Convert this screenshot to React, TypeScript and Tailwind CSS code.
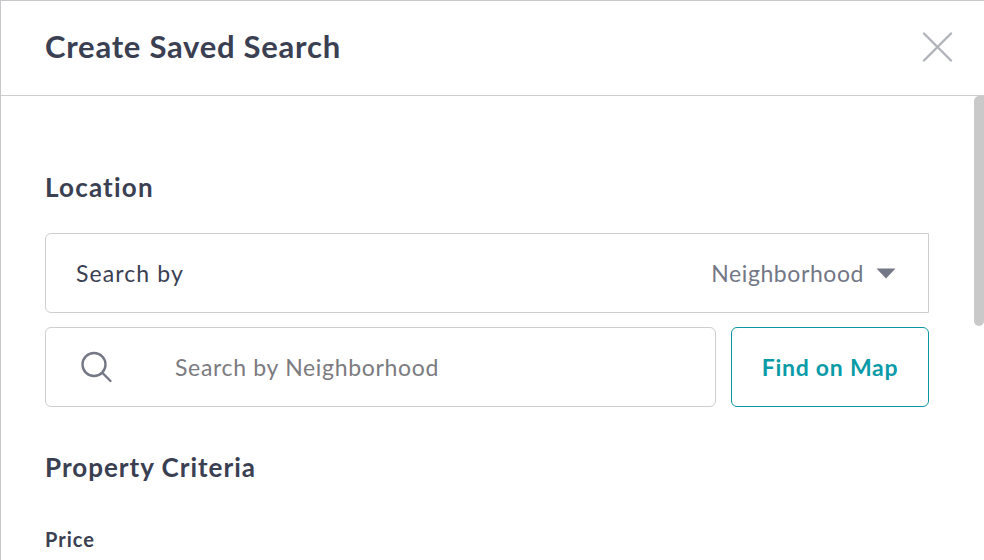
const font = "font-['Lato','Noto_Sans',sans-serif]";

function SectionTitle({ children, className }: { children: string; className: string }) {
  return <h2 className={`text-[26px] leading-8 font-bold text-[#3a4052] ${className}`}>{children}</h2>;
}

export default function App() {
  return (
    <div className={`${font} relative h-[560px] w-[984px] overflow-hidden border-t border-l border-[#c8c8cc] bg-white`}>
      {/* Header */}
      <header className="flex h-[95px] items-center justify-between border-b border-[#cdcdd0] pr-[31px] pl-[44px]">
        <h1 className="pb-1 text-[31px] leading-10 font-bold tracking-[0.75px] text-[#3a4052]">Create Saved Search</h1>
        <svg width="31" height="30" viewBox="0 0 31 30" fill="none" className="mb-[2px] stroke-[#b1b3ba]" strokeWidth="2.4" strokeLinecap="round">
          <path d="M2 1.5l27 27M29 1.5l-27 27" />
        </svg>
      </header>

      {/* Scrollbar */}
      <div className="absolute top-[95px] right-0 h-[230px] w-[10px] rounded-l-[5px] rounded-b-[5px] bg-[#c9c9c9]" />

      {/* Form */}
      <main className="flex w-[928px] flex-col pt-[75px] pl-[44px]">
        <SectionTitle className="tracking-[1.2px]">Location</SectionTitle>

        <div className="mt-[30px] flex h-20 items-center justify-between rounded-l-md border border-[#cdcdd2] pr-[32px] pl-[30px]">
          <span className="text-[23px] tracking-[1.1px] text-[#3a4052]">Search by</span>
          <span className="flex items-center gap-3 text-[23px] tracking-[0.58px] text-[#747785]">
            Neighborhood
            <svg width="20" height="11" viewBox="0 0 20 11" className="fill-[#747785]">
              <path d="M0.5 0.5h19L10 10.5z" />
            </svg>
          </span>
        </div>

        <div className="mt-[14px] flex gap-[15px]">
          <div className="flex h-20 w-[671px] items-center rounded-md border border-[#cdcdd2] pl-[33px]">
            <svg width="34" height="34" viewBox="0 0 34 34" fill="none" className="stroke-[#747785]" strokeWidth="2.4" strokeLinecap="round">
              <circle cx="15" cy="14.5" r="11.5" />
              <path d="M23.5 23l8 8" />
            </svg>
            <span className="ml-[62px] text-[23px] tracking-[0.68px] text-[#7b7b80]">Search by Neighborhood</span>
          </div>
          <button className="h-20 w-[198px] rounded-md border border-[#0b97a5] text-[23px] font-bold tracking-[0.75px] text-[#0b9ba8]">
            Find on Map
          </button>
        </div>

        <SectionTitle className="mt-[44px] tracking-[1px]">Property Criteria</SectionTitle>

        <h3 className="mt-[44px] text-[20px] leading-6 font-bold tracking-[1px] text-[#3a4052]">Price</h3>
      </main>
    </div>
  );
}
